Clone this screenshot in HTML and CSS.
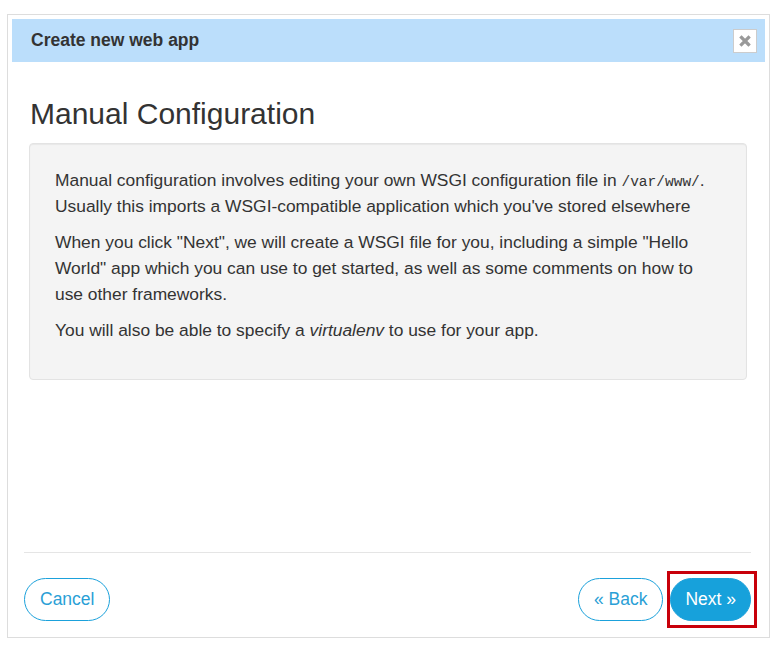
FILE: index.html
```html
<!DOCTYPE html>
<html lang="en">
<head>
    <meta charset="UTF-8">
    <meta name="viewport" content="width=device-width, initial-scale=1.0">
    <title>Create new web app</title>
    <link rel="stylesheet" href="styles.css">
</head>
<body>

<div class="modal">
    <!-- Header -->
    <div class="modal-header">
        <span class="modal-title">Create new web app</span>
        <button class="close-btn" type="button" aria-label="Close">
            <svg width="12" height="12" viewBox="0 0 12 12">
                <path d="M2.5 2.5 L9.5 9.5 M9.5 2.5 L2.5 9.5" stroke="#999" stroke-width="3.2" stroke-linecap="square"/>
            </svg>
        </button>
    </div>

    <!-- Body -->
    <div class="modal-body">
        <h2>Manual Configuration</h2>
        <div class="well">
            <p>Manual configuration involves editing your own WSGI configuration file in <code>/var/www/</code>.
                Usually this imports a WSGI-compatible application which you've stored elsewhere</p>
            <p>When you click "Next", we will create a WSGI file for you, including a simple "Hello World" app which you can use to get started, as well as some comments on how to use other frameworks.</p>
            <p>You will also be able to specify a <em>virtualenv</em> to use for your app.</p>
        </div>
    </div>

    <!-- Footer -->
    <div class="modal-footer">
        <button class="btn" type="button">Cancel</button>
        <div class="footer-right">
            <button class="btn" type="button">&laquo; Back</button>
            <span class="highlight">
                <button class="btn btn-primary" type="button">Next &raquo;</button>
            </span>
        </div>
    </div>
</div>

</body>
</html>
```

FILE: styles.css
```css
body {
    margin: 0;
    background-color: #fff;
    font-family: "Liberation Sans", Arial, sans-serif;
    color: #333;
}

/* Dialog container */
.modal {
    box-sizing: border-box;
    width: 763px;
    height: 624px;
    margin: 14px 0 0 7px;
    padding: 4px;
    border: 1px solid #ddd;
    display: flex;
    flex-direction: column;
}

.modal-header {
    height: 43px;
    background-color: #bbdefb;
    display: flex;
    align-items: center;
    justify-content: space-between;
    padding: 0 8px 0 19px;
}

.modal-title {
    font-size: 17.5px;
    font-weight: bold;
    color: #333;
}

.close-btn {
    width: 24px;
    height: 24px;
    padding: 0;
    border: 1px solid #ccc;
    background-color: #fff;
    display: flex;
    align-items: center;
    justify-content: center;
    margin-top: 1px;
}

.modal-body {
    flex: 1;
    padding: 0 18px 0 17px;
}

.modal-body h2 {
    font-size: 30px;
    font-weight: normal;
    margin: 34px 0 11px 1px;
    line-height: 36px;
}

/* Grey info box */
.well {
    background-color: #f4f4f4;
    border: 1px solid #e3e3e3;
    border-radius: 4px;
    box-shadow: inset 0 1px 1px rgba(0, 0, 0, 0.05);
    padding: 23px 24px 26px 25px;
}

.well p {
    font-size: 17.4px;
    line-height: 26px;
    margin: 0 0 10px;
}

.well code {
    font-family: "Liberation Mono", "DejaVu Sans Mono", monospace;
    font-size: 14.5px;
    line-height: 1;
}

.modal-footer {
    border-top: 1px solid #e5e5e5;
    margin: 0 14px 0 12px;
    padding: 25px 0 12px;
    display: flex;
    justify-content: space-between;
    align-items: center;
}

.footer-right {
    display: flex;
    align-items: center;
    gap: 4px;
}

/* Pill buttons */
.btn {
    height: 43px;
    padding: 0 15px;
    border: 1px solid #1ba1db;
    border-radius: 22px;
    background-color: #fff;
    color: #2a9fd6;
    font-family: "Liberation Sans", Arial, sans-serif;
    font-size: 17.5px;
    cursor: pointer;
}

.btn-primary {
    background-color: #17a1db;
    color: #fff;
    padding: 0 14px;
}

.highlight {
    display: inline-flex;
    padding: 4px 3px 4px 0;
    border: 3px solid #c8000a;
    margin: -7px -6px -7px 0;
}
```
